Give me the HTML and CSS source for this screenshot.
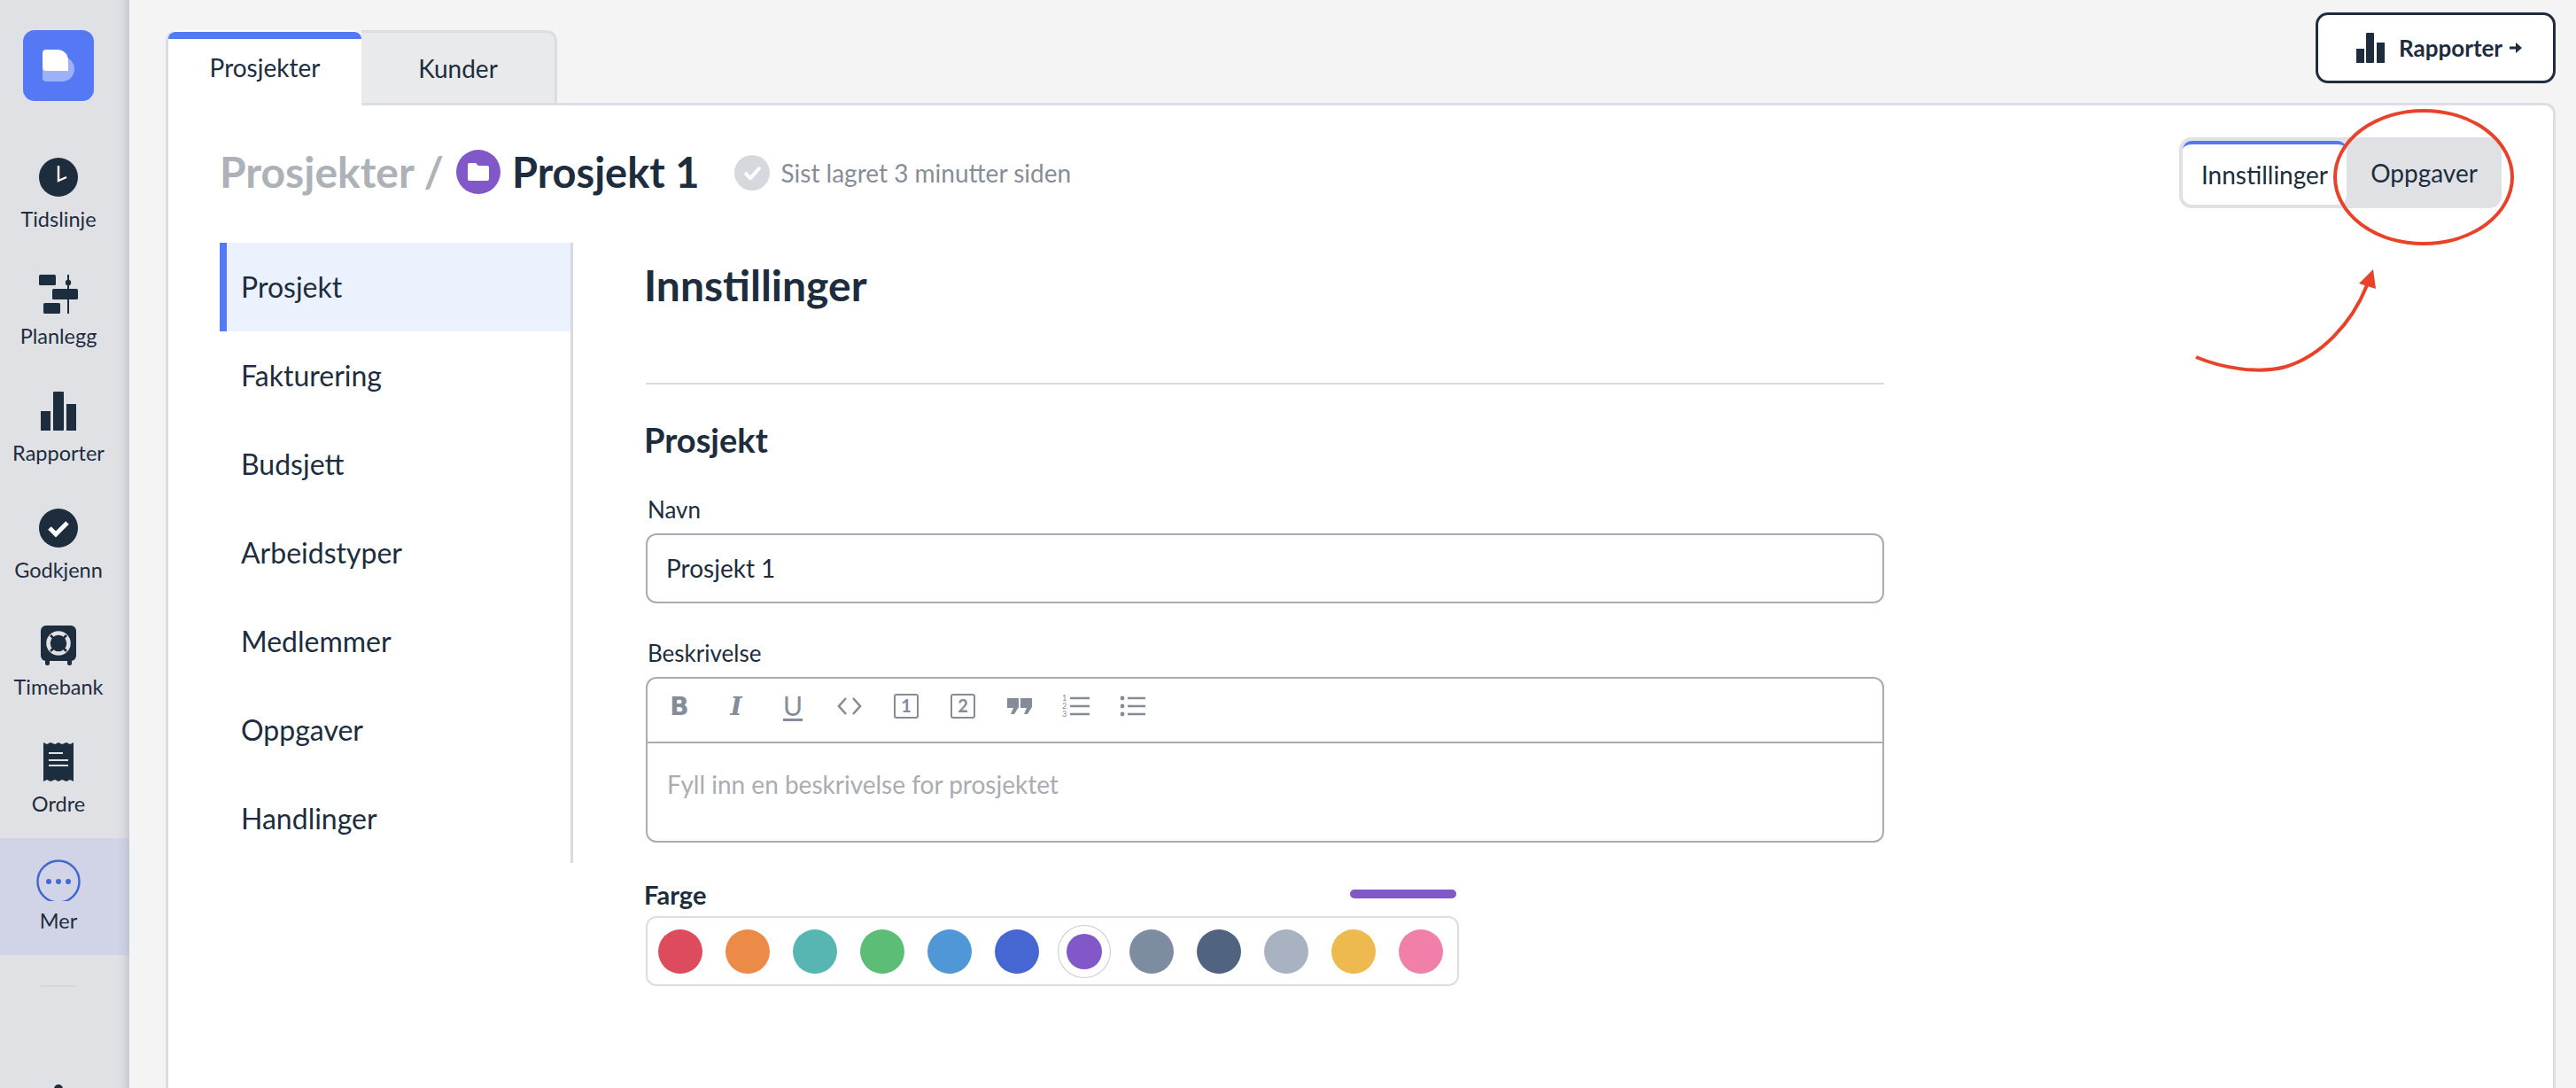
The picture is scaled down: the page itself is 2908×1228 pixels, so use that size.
FILE: index.html
```html
<!DOCTYPE html>
<html lang="no">
<head>
<meta charset="utf-8">
<title>Prosjekt 1</title>
<link rel="stylesheet" href="styles.css">
</head>
<body>
<div class="app">
  <aside class="sidebar">
    <div class="logo">
      <svg width="80" height="80" viewBox="0 0 80 80"><path fill="#9db0fa" d="M22 30h22a14 14 0 0 1 14 14a14 14 0 0 1-14 14H26a4 4 0 0 1-4-4z"/><path fill="#fff" d="M26 22h13a12 12 0 0 1 12 12v12H26a4 4 0 0 1-4-4V26a4 4 0 0 1 4-4z"/></svg>
    </div>
    <a class="side-item">
      <svg class="side-icon" viewBox="0 0 50 50"><circle cx="25" cy="25" r="22" fill="#1d2d3e"/><path d="M25 12v17l9-4" fill="none" stroke="#fff" stroke-width="2.4"/></svg>
      <span>Tidslinje</span>
    </a>
    <a class="side-item">
      <svg class="side-icon" viewBox="0 0 50 50"><g fill="#1d2d3e"><rect x="3" y="3" width="19" height="12" rx="1.5"/><rect x="18" y="19" width="29" height="12" rx="1.5"/><rect x="8" y="35" width="19" height="12" rx="1.5"/><rect x="35" y="3" width="2" height="44"/><circle cx="36" cy="12" r="3.2"/></g></svg>
      <span>Planlegg</span>
    </a>
    <a class="side-item">
      <svg class="side-icon" viewBox="0 0 50 50"><g fill="#1d2d3e"><rect x="5" y="25" width="11" height="22"/><rect x="19" y="3" width="12" height="44" rx="1"/><rect x="34" y="17" width="11" height="30"/></g></svg>
      <span>Rapporter</span>
    </a>
    <a class="side-item">
      <svg class="side-icon" viewBox="0 0 50 50"><circle cx="25" cy="25" r="22" fill="#1d2d3e"/><path d="M15 25l7 7 13-13" fill="none" stroke="#fff" stroke-width="5"/></svg>
      <span>Godkjenn</span>
    </a>
    <a class="side-item">
      <svg class="side-icon" viewBox="0 0 50 50"><rect x="5" y="3" width="40" height="40" rx="6" fill="#1d2d3e"/><rect x="10" y="40" width="5" height="8" rx="2" fill="#1d2d3e"/><rect x="35" y="40" width="5" height="8" rx="2" fill="#1d2d3e"/><circle cx="25" cy="23" r="11.500" fill="none" stroke="#e0e1e5" stroke-width="4.500"/><circle cx="25" cy="23" r="5" fill="#1d2d3e"/><path d="M16 14l6 6M34 14l-6 6M16 32l6-6M34 32l-6-6" stroke="#1d2d3e" stroke-width="2.500"/></svg>
      <span>Timebank</span>
    </a>
    <a class="side-item">
      <svg class="side-icon" viewBox="0 0 50 50"><path fill="#1d2d3e" d="M8 3l4 2 4-2 5 2 4-2 4 2 5-2 4 2 4-2v44l-4-2-4 2-5-2-4 2-4-2-5 2-4-2-4 2z"/><path d="M14 15h16M14 23h22M14 29h22" stroke="#e0e1e5" stroke-width="2"/></svg>
      <span>Ordre</span>
    </a>
    <a class="side-item side-item-active">
      <svg class="side-icon" viewBox="0 0 50 50"><circle cx="25" cy="28" r="23.500" fill="none" stroke="#4667d1" stroke-width="2.500"/><g fill="#4667d1"><circle cx="14" cy="28" r="3"/><circle cx="25" cy="28" r="3"/><circle cx="36" cy="28" r="3"/></g></svg>
      <span>Mer</span>
    </a>
    <div class="side-sep"></div>
    <div class="side-stub"></div>
  </aside>

  <main class="main">
    <div class="top-row">
      <div class="tabs">
        <button class="tab tab-active">Prosjekter</button>
        <button class="tab">Kunder</button>
      </div>
      <button class="report-btn">
        <svg width="32" height="34" viewBox="0 0 32 34"><g fill="#1d2d3e"><rect x="0" y="18" width="9" height="16"/><rect x="11" y="0" width="9" height="34" rx="1"/><rect x="23" y="11" width="9" height="23"/></g></svg>
        <span>Rapporter</span>
        <svg class="report-arrow" width="14" height="12" viewBox="0 0 14 12"><path fill="#1d2d3e" d="M0 4.500h7V0l7 6-7 6V7.500H0z"/></svg>
      </button>
    </div>

    <section class="card">
      <header class="card-head">
        <div class="crumbs">
          <span class="crumb-muted">Prosjekter /</span>
          <span class="folder"><svg width="26" height="22" viewBox="0 0 26 22"><path fill="#fff" d="M3 1h7l3 3h10a2 2 0 0 1 2 2v13a2 2 0 0 1-2 2H3a2 2 0 0 1-2-2V3a2 2 0 0 1 2-2z"/></svg></span>
          <span class="crumb-title">Prosjekt 1</span>
          <span class="saved-check"><svg width="40" height="40" viewBox="0 0 40 40"><circle cx="20" cy="20" r="20" fill="#d5d8dd"/><path d="M12 20l6 6 11-12" fill="none" stroke="#fff" stroke-width="4"/></svg></span>
          <span class="saved">Sist lagret 3 minutter siden</span>
        </div>
        <div class="segment">
          <button class="seg seg-active">Innstillinger</button>
          <button class="seg">Oppgaver</button>
        </div>
      </header>

      <div class="card-body">
        <nav class="subnav">
          <a class="subnav-item subnav-active">Prosjekt</a>
          <a class="subnav-item">Fakturering</a>
          <a class="subnav-item">Budsjett</a>
          <a class="subnav-item">Arbeidstyper</a>
          <a class="subnav-item">Medlemmer</a>
          <a class="subnav-item">Oppgaver</a>
          <a class="subnav-item">Handlinger</a>
        </nav>

        <div class="form">
          <h1 class="form-title">Innstillinger</h1>
          <hr class="rule">
          <h2 class="form-section">Prosjekt</h2>
          <label class="field-label label-name">Navn</label>
          <div class="input">Prosjekt 1</div>
          <label class="field-label label-desc">Beskrivelse</label>
          <div class="editor">
            <div class="toolbar">
              <span class="tool tool-b">B</span>
              <span class="tool tool-i">I</span>
              <span class="tool"><span class="tool-u">U</span></span>
              <span class="tool"><svg width="30" height="24" viewBox="0 0 30 24"><path d="M11 3l-8 9 8 9M19 3l8 9-8 9" fill="none" stroke="#858c98" stroke-width="2.600"/></svg></span>
              <span class="tool"><span class="tool-box">1</span></span>
              <span class="tool"><span class="tool-box">2</span></span>
              <span class="tool"><svg width="30" height="20" viewBox="0 0 30 20"><path fill="#858c98" d="M1 1h13v10l-5 8H5l3-7H1zM16 1h13v10l-5 8h-4l3-7h-7z"/></svg></span>
              <span class="tool"><svg width="32" height="28" viewBox="0 0 32 28"><text x="0" y="8" class="ol-num">1</text><text x="0" y="17" class="ol-num">2</text><text x="0" y="26" class="ol-num">3</text><path d="M9 5h22M9 14h22M9 23h22" stroke="#858c98" stroke-width="2.600"/></svg></span>
              <span class="tool"><svg width="30" height="28" viewBox="0 0 30 28"><g fill="#858c98"><circle cx="3" cy="5" r="2.400"/><circle cx="3" cy="14" r="2.400"/><circle cx="3" cy="23" r="2.400"/></g><path d="M9 5h20M9 14h20M9 23h20" stroke="#858c98" stroke-width="2.600"/></svg></span>
            </div>
            <div class="editor-body">Fyll inn en beskrivelse for prosjektet</div>
          </div>
          <div class="color-picker">
            <div class="color-head">
              <span class="color-label">Farge</span>
              <span class="color-bar"></span>
            </div>
            <div class="swatches">
              <span class="swatch c-red"></span>
              <span class="swatch c-orange"></span>
              <span class="swatch c-teal"></span>
              <span class="swatch c-green"></span>
              <span class="swatch c-blue"></span>
              <span class="swatch c-dblue"></span>
              <span class="swatch swatch-sel c-purple"></span>
              <span class="swatch c-slate"></span>
              <span class="swatch c-navy"></span>
              <span class="swatch c-light"></span>
              <span class="swatch c-yellow"></span>
              <span class="swatch c-pink"></span>
            </div>
          </div>
        </div>
      </div>
    </section>
  </main>

  <svg class="annotation" width="380" height="310" viewBox="0 0 380 310">
    <ellipse cx="266" cy="80" rx="100" ry="75" fill="none" stroke="#e8432a" stroke-width="4"/>
    <path d="M9 283C40 296 80 302 110 294C150 282 185 245 202 202" fill="none" stroke="#e8432a" stroke-width="4"/>
    <path fill="#e8432a" d="M209 184L193 200L212 206z"/>
  </svg>
</div>
</body>
</html>
```

FILE: styles.css
```css
* { box-sizing: border-box; }
html, body { margin: 0; padding: 0; }
body {
  font-family: "Lato", "Liberation Sans", sans-serif;
  color: #1d2d3e;
  background: #f4f4f4;
}
button { font: inherit; color: inherit; background: none; border: 0; padding: 0; }

.app {
  position: relative;
  display: flex;
  width: 2908px;
  height: 1228px;
  overflow: hidden;
}

/* Sidebar */
.sidebar {
  position: relative;
  flex: 0 0 146px;
  padding-top: 34px;
  background: #e0e1e5;
  box-shadow: inset -14px 0 12px -12px rgba(90, 95, 110, .28);
  overflow: hidden;
}
.logo {
  width: 80px;
  height: 80px;
  margin: 0 0 40px 26px;
  border-radius: 13px;
  background: #5578f5;
}
.logo svg { display: block; }
.side-item {
  display: flex;
  flex-direction: column;
  align-items: center;
  width: 132px;
  height: 132px;
  padding-top: 21px;
  font-size: 23.500px;
  line-height: 32px;
}
.side-item-active {
  width: 146px;
  padding-right: 14px;
  background: #d0d4e6;
  box-shadow: inset -14px 0 12px -12px rgba(90, 95, 110, .22);
}
.side-icon { display: block; width: 50px; height: 50px; margin-bottom: 6px; flex: none; }
.side-sep { width: 40px; height: 2px; margin: 34px 0 0 46px; background: #d5d7dc; }
.side-stub { width: 10px; height: 10px; margin: 110px 0 0 61px; border-radius: 50%; background: #1d2d3e; }

/* Main */
.main { flex: 1; min-width: 0; padding: 0 23px 0 41px; display: flex; flex-direction: column; }
.top-row { display: flex; justify-content: space-between; height: 116px; flex: none; }
.tabs { display: flex; margin-top: 34px; height: 85px; position: relative; z-index: 1; }
.tab {
  width: 221px;
  height: 82px;
  background: #e9eaec;
  border-top: 3px solid #dcdee3;
  border-right: 3px solid #dcdee3;
  border-radius: 0 12px 0 0;
  font-size: 28px;
  line-height: 78px;
  text-align: center;
}
.tab-active {
  height: 85px;
  background: #fff;
  border-left: 3px solid #dcdee3;
  border-right: 0;
  border-top: 0;
  border-radius: 12px 12px 0 0;
  line-height: 85px;
  position: relative;
}
.tab-active::before {
  content: "";
  position: absolute;
  left: 0;
  right: 0;
  top: 2px;
  height: 8px;
  border-radius: 8px 8px 0 0;
  background: #5578f5;
}
.report-btn {
  display: flex;
  align-items: center;
  width: 271px;
  height: 80px;
  margin-top: 14px;
  padding-left: 43px;
  border: 3px solid #1d2d3e;
  border-radius: 14px;
  background: #fff;
  font-size: 26px;
  font-weight: 700;
}
.report-btn span { margin-left: 16px; }
.report-arrow { margin-left: 8px; }

.card {
  flex: 1;
  min-height: 0;
  background: #fff;
  border: 3px solid #dcdee3;
  border-bottom: 0;
  border-radius: 0 12px 0 0;
  padding: 0 58px;
}
.card-head {
  display: flex;
  justify-content: space-between;
  align-items: center;
  height: 80px;
  margin-top: 36px;
}
.crumbs { display: flex; align-items: center; }
.crumb-muted { font-size: 48px; font-weight: 700; color: #adb1b8; margin-bottom: 3px; }
.crumb-title { font-size: 47px; font-weight: 700; margin: 0 0 3px 13px; }
.folder {
  display: flex;
  align-items: center;
  justify-content: center;
  width: 50px;
  height: 50px;
  margin: 0 0 2px 14px;
  border-radius: 50%;
  background: #8257c8;
}
.saved-check { display: flex; margin-left: 40px; }
.saved { margin-left: 12px; font-size: 28px; color: #868d98; }

.segment {
  display: flex;
  width: 364px;
  height: 80px;
  border-radius: 14px;
  background: #e0e1e5;
  padding: 4px 0 4px 4px;
  font-size: 28px;
}
.seg { flex: 1; text-align: center; }
.seg-active {
  flex: 0 0 185px;
  background: #fff;
  border-top: 4px solid #5578f5;
  border-radius: 10px;
}

.card-body { display: flex; margin-top: 39px; }
.subnav { flex: 0 0 399px; height: 700px; border-right: 3px solid #d8dade; }
.subnav-item {
  display: flex;
  align-items: center;
  height: 100px;
  padding: 0 0 2px 24px;
  font-size: 32px;
}
.subnav-active {
  padding-left: 16px;
  border-left: 8px solid #5578f5;
  background: #ebf1fd;
}

.form { flex: 0 0 1398px; margin-left: 82px; }
.form-title { margin: 0 0 0 -2px; font-size: 48px; font-weight: 700; line-height: 96px; }
.rule { height: 2px; margin: 62px 0 0; border: 0; background: #d9dbdf; }
.form-section { margin: 42px 0 0 -2px; font-size: 38px; font-weight: 700; line-height: 40px; }
.field-label { display: block; margin-left: 2px; font-size: 26px; line-height: 32px; }
.label-name { margin-top: 43px; }
.label-desc { margin-top: 40px; }
.input {
  display: flex;
  align-items: center;
  height: 79px;
  margin-top: 11px;
  padding: 0 0 2px 21px;
  border: 2px solid #a8adb5;
  border-radius: 12px;
  font-size: 28px;
}
.editor {
  height: 187px;
  margin-top: 11px;
  border: 2px solid #a8adb5;
  border-radius: 12px;
}
.toolbar {
  display: flex;
  align-items: center;
  box-sizing: content-box;
  height: 62px;
  padding: 0 0 9px 4px;
  border-bottom: 2px solid #a8adb5;
  color: #858c98;
}
.tool { display: flex; align-items: center; justify-content: center; flex: 0 0 64px; font-size: 30px; }
.tool-b { font-family: "DejaVu Sans", sans-serif; font-weight: 700; font-size: 28px; }
.tool-i { font-family: "DejaVu Serif", serif; font-weight: 700; font-style: italic; font-size: 28px; }
.tool-u { border-bottom: 3px solid #858c98; line-height: 30px; font-size: 30px; }
.tool-box {
  width: 28px;
  height: 28px;
  border: 2.500px solid #858c98;
  border-radius: 3px;
  font-size: 20px;
  font-weight: 700;
  line-height: 23px;
  text-align: center;
}
.ol-num { font-size: 9px; fill: #858c98; }
.editor-body {
  display: flex;
  align-items: center;
  height: 112px;
  padding: 0 0 20px 22px;
  font-size: 28px;
  color: #a9adb3;
}
.color-picker { width: 918px; margin-top: 42px; }
.color-head { display: flex; justify-content: space-between; align-items: center; height: 32px; padding-right: 3px; }
.color-label { margin-left: -2px; font-size: 29px; font-weight: 700; }
.color-bar { width: 120px; height: 10px; border-radius: 5px; background: #8257c8; }
.swatches {
  display: flex;
  align-items: center;
  gap: 26px;
  height: 79px;
  margin-top: 9px;
  padding-left: 12px;
  border: 2px solid #dadde2;
  border-radius: 12px;
}
.swatch { flex: 0 0 50px; width: 50px; height: 50px; border-radius: 50%; }
.swatch-sel {
  flex: 0 0 40px;
  width: 40px;
  height: 40px;
  margin: 0 5px;
  box-shadow: 0 0 0 9px #fff, 0 0 0 10px #c9ccd1;
}
.c-red { background: #dc4b5e; }
.c-orange { background: #ec8a48; }
.c-teal { background: #57b6b2; }
.c-green { background: #5cbd76; }
.c-blue { background: #4f97d6; }
.c-dblue { background: #4667d1; }
.c-purple { background: #8257c8; }
.c-slate { background: #7e8ca2; }
.c-navy { background: #506380; }
.c-light { background: #a9b2c0; }
.c-yellow { background: #eeb94f; }
.c-pink { background: #f07fa9; }

/* Hand-drawn annotation over the screenshot */
.annotation { position: absolute; left: 2470px; top: 120px; pointer-events: none; }
```
